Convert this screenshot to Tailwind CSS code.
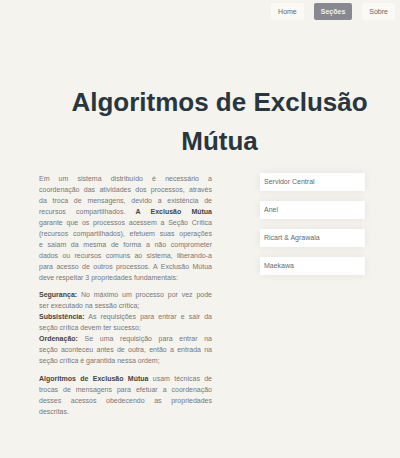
<!DOCTYPE html>
<html lang="pt-BR">
<head>
<meta charset="utf-8">
<meta name="viewport" content="width=device-width, initial-scale=1">
<title>Algoritmos de Exclusão Mútua</title>
<script src="https://cdn.jsdelivr.net/npm/@tailwindcss/browser@4"></script>
</head>
<body class="min-h-screen bg-[#f5f3ee] font-['Liberation_Sans',Arial,sans-serif] text-[7px] leading-[11px] text-[#777777]">
<header class="pt-[3px] pr-[5px]">
  <nav class="flex justify-end gap-[10px]">
    <a href="#" class="rounded-xs bg-[#faf9f6] px-[7px] py-[3px] text-[#666666]">Home</a>
    <a href="#secoes" class="rounded-xs bg-[#888890] px-[7px] py-[3px] font-bold text-[#f5f3ee]">Seções</a>
    <a href="#sobre" class="rounded-xs bg-[#faf9f6] px-[7px] py-[3px] text-[#666666]">Sobre</a>
  </nav>
</header>
<main class="pt-[63px] pr-[35px] pl-[39px]">
  <h1 class="-mr-[35px] text-center text-[26px] leading-[39px] font-bold text-[#28363d]">Algoritmos de Exclusão Mútua</h1>
  <div class="mt-3 flex justify-between gap-12">
    <article class="min-w-0 flex-1 text-justify [text-align-last:justify] [&_strong]:text-[#444444]">
      <p>Em um sistema distribuído é necessário a<br>
        coordenação das atividades dos processos, através<br>
        da troca de mensagens, devido a existência de<br>
        recursos compartilhados. <strong>A Exclusão Mútua</strong><br>
        garante que os processos acessem a Seção Crítica<br>
        (recursos compartilhados), efetuem suas operações<br>
        e saiam da mesma de forma a não comprometer<br>
        dados ou recursos comuns ao sistema, liberando-a<br>
        para acesso de outros processos. A Exclusão Mútua
        <span class="block [text-align-last:left]">deve respeitar 3 propriedades fundamentais:</span></p>
      <ul class="mt-[6px] mb-[7px]">
        <li><strong>Segurança:</strong> No máximo um processo por vez pode
          <span class="block [text-align-last:left]">ser executado na sessão crítica;</span></li>
        <li><strong>Subsistência:</strong> As requisições para entrar e sair da
          <span class="block [text-align-last:left]">seção crítica devem ter sucesso;</span></li>
        <li><strong>Ordenação:</strong> Se uma requisição para entrar na<br>
          seção aconteceu antes de outra, então a entrada na
          <span class="block [text-align-last:left]">seção crítica é garantida nessa ordem;</span></li>
      </ul>
      <p><strong>Algoritmos de Exclusão Mútua</strong> usam técnicas de<br>
        trocas de mensagens para efetuar a coordenação<br>
        desses acessos obedecendo as propriedades
        <span class="block [text-align-last:left]">descritas.</span></p>
    </article>
    <nav id="secoes" class="flex w-[105px] flex-col gap-[10px] text-[#5f6b70]">
      <a href="#" class="bg-white px-1 py-[3px] leading-3 shadow-[0_0_8px_rgba(0,0,0,0.07)]">Servidor Central</a>
      <a href="#" class="bg-white px-1 py-[3px] leading-3 shadow-[0_0_8px_rgba(0,0,0,0.07)]">Anel</a>
      <a href="#" class="bg-white px-1 py-[3px] leading-3 shadow-[0_0_8px_rgba(0,0,0,0.07)]">Ricart &amp; Agrawala</a>
      <a href="#" class="bg-white px-1 py-[3px] leading-3 shadow-[0_0_8px_rgba(0,0,0,0.07)]">Maekawa</a>
    </nav>
  </div>
</main>
</body>
</html>
